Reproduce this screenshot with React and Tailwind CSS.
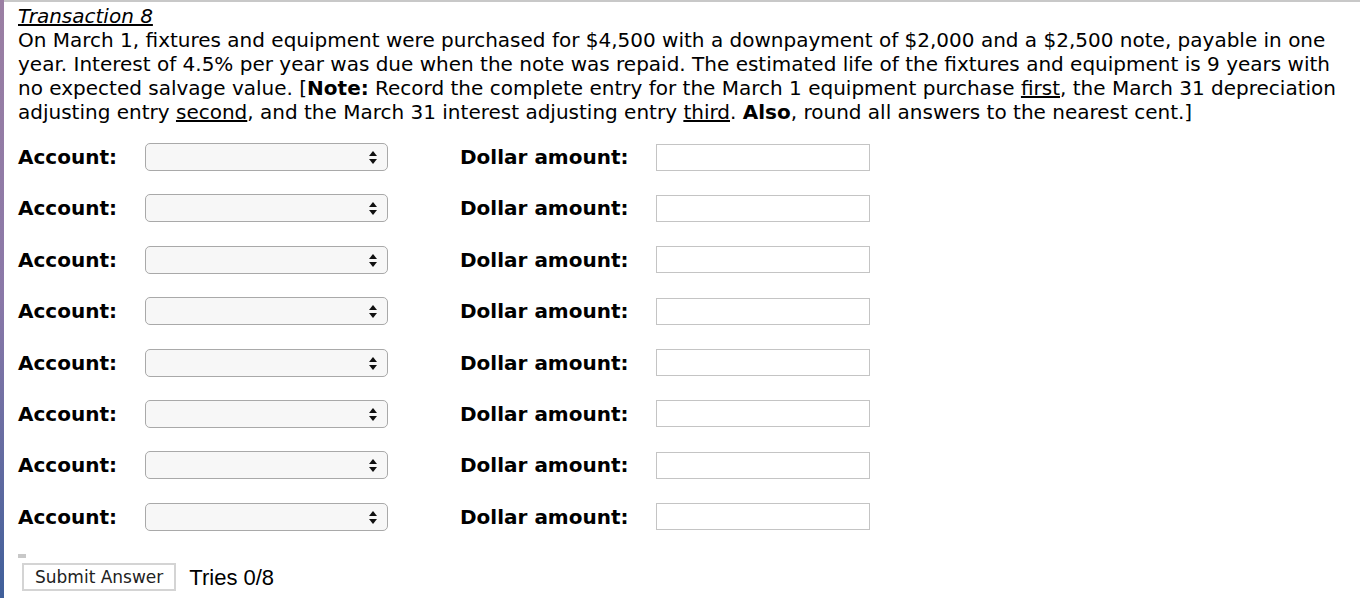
import React from "react";

const rows = Array.from({ length: 8 }, (_, i) => i);

function SelectBox() {
  return (
    <div className="relative w-[243px] h-[28px] rounded-[5px] border border-[#a9a9a9] bg-[#f7f7f7]">
      <svg className="absolute right-[9px] top-[6px]" width="10" height="15" viewBox="0 0 10 15">
        <path d="M5 1 L9 6 L1 6 Z" fill="#111" />
        <path d="M5 14 L9 9 L1 9 Z" fill="#111" />
      </svg>
    </div>
  );
}

export default function App() {
  return (
    <div className="flex w-[1368px] h-[598px] bg-white overflow-hidden" style={{ fontFamily: '"DejaVu Sans", Verdana, sans-serif' }}>
      <div className="w-[4px] h-full bg-gradient-to-b from-[#9b7fa3] via-[#8a78a8] to-[#3f5f9a]" />
      <div className="w-[1356px] flex flex-col">
        <div className="h-[2px] bg-[#c8c8c8]" />
        <div className="pl-[14px] pt-[2px] text-[20px] leading-[24px] text-black whitespace-nowrap">
          <div className="italic underline">Transaction 8</div>
          <p>
            On March 1, fixtures and equipment were purchased for $4,500 with a downpayment of $2,000 and a $2,500 note, payable in one
            <br />
            year. Interest of 4.5% per year was due when the note was repaid. The estimated life of the fixtures and equipment is 9 years with
            <br />
            no expected salvage value. [<b>Note:</b> Record the complete entry for the March 1 equipment purchase <u>first</u>, the March 31 depreciation
            <br />
            adjusting entry <u>second</u>, and the March 31 interest adjusting entry <u>third</u>. <b>Also</b>, round all answers to the nearest cent.]
          </p>
        </div>
        <div className="flex flex-col pl-[14px] mt-[19px] gap-[23.4px]">
          {rows.map((i) => (
            <div key={i} className="flex items-center h-[28px]">
              <span className="w-[127px] text-[20px] font-bold">Account:</span>
              <SelectBox />
              <span className="ml-[72px] w-[196px] text-[20px] font-bold">Dollar amount:</span>
              <div className="w-[214px] h-[27px] border border-[#c4c4c4] bg-white" />
            </div>
          ))}
        </div>
        <div className="pl-[14px] mt-[23px]">
          <div className="w-[8px] h-[4px] bg-[#c8c8c8]" />
          <div className="flex items-center mt-[3px] ml-[4px]">
            <button className="h-[28px] px-[11px] border-2 border-[#d4d4d4] bg-white text-[17px] text-[#222]" style={{ fontFamily: '"DejaVu Sans", sans-serif' }}>
              Submit Answer
            </button>
            <span className="ml-[13px] text-[22px]" style={{ fontFamily: '"Liberation Sans", Arial, sans-serif' }}>Tries 0/8</span>
          </div>
        </div>
      </div>
    </div>
  );
}
